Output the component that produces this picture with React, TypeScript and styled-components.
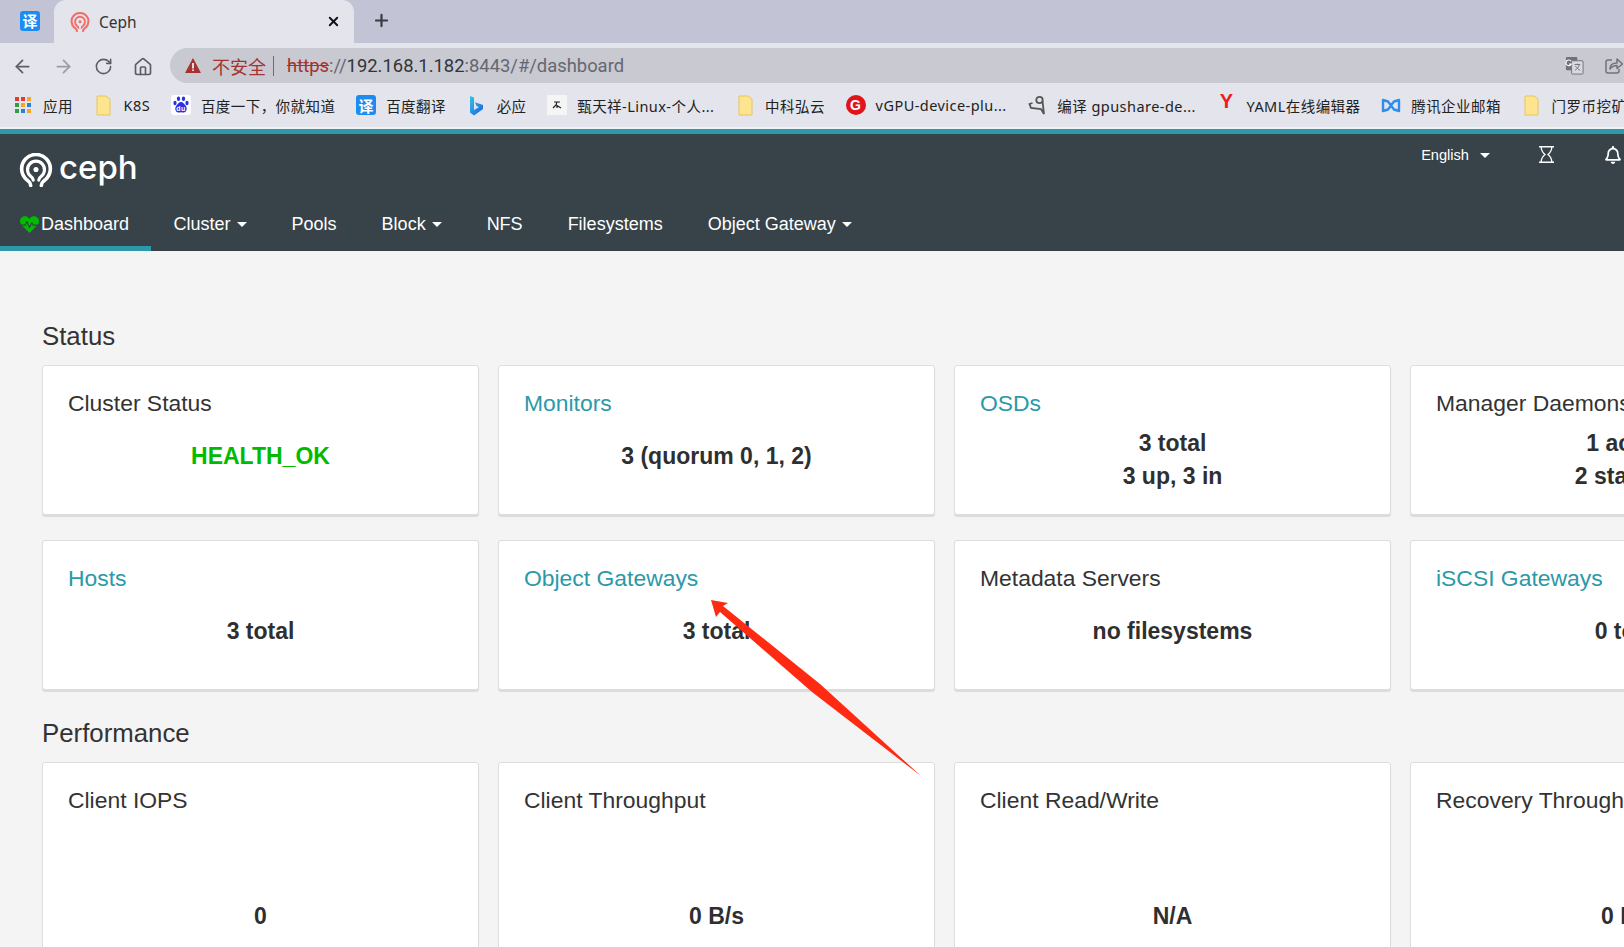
import React from 'react';
import styled, { createGlobalStyle } from 'styled-components';
import { ArrowLeft, ArrowRight, RotateCw, House, Plus, X } from 'lucide-react';
import { FaHeartbeat, FaRegBell } from 'react-icons/fa';

const GlobalStyle = createGlobalStyle`
    html, body {
        margin: 0;
        padding: 0;
        background: #f4f4f4;
        overflow: hidden;
    }
`;

const Page = styled.div`
    position: relative;
    width: 1624px;
    height: 947px;
    overflow: hidden;
    font-family: "Liberation Sans", Arial, sans-serif;
    color: #333;
`;

/* browser chrome */
const TabStrip = styled.div`
    display: flex;
    align-items: stretch;
    height: 43px;
    background: #c2c3d5;
    font-family: "Noto Sans", "Noto Sans CJK SC", sans-serif;
`;

const PinnedTab = styled.div`
    display: flex;
    align-items: center;
    width: 54px;
    padding: 0 0 2px 20px;
    box-sizing: border-box;
`;

const ActiveTab = styled.div`
    display: flex;
    align-items: center;
    width: 300px;
    padding: 0 13px 0 16px;
    box-sizing: border-box;
    background: #e3e4ec;
    border-radius: 12px 12px 0 0;
    font-size: 15.5px;
    color: #333;
`;

const TabTitle = styled.span`
    flex: 1;
    margin-left: 9px;
`;

const NewTab = styled.div`
    display: flex;
    align-items: center;
    padding: 0 0 2px 18px;
    color: #3c3c44;
`;

const Toolbar = styled.div`
    display: flex;
    align-items: flex-end;
    height: 40px;
    background: #e3e4ec;
    font-family: "Noto Sans", "Noto Sans CJK SC", sans-serif;
`;

const ToolButtons = styled.div`
    display: flex;
    align-items: center;
    gap: 20px;
    width: 170px;
    height: 35px;
    padding: 2px 0 0 12px;
    box-sizing: border-box;
`;

const ToolButton = styled.span<{ $dim?: boolean }>`
    display: flex;
    color: ${p => (p.$dim ? '#9a9ba6' : '#5c5d66')};
`;

const Omnibox = styled.div`
    display: flex;
    align-items: center;
    flex: 1;
    height: 35px;
    padding-left: 15px;
    background: #c8c9d1;
    border-radius: 18px 0 0 18px;
    font-family: Roboto, sans-serif;
    font-size: 18.4px;
    color: #666770;
`;

const NotSecure = styled.span`
    margin-left: 11px;
    font-family: "Noto Sans CJK SC", sans-serif;
    font-size: 18px;
    color: #a5322e;
`;

const Divider = styled.span`
    width: 1px;
    height: 20px;
    margin: 0 13px 0 7px;
    background: #6b6c74;
`;

const Scheme = styled.span`
    color: #a5322e;
    text-decoration: line-through;
`;

const Host = styled.span`
    color: #33343a;
`;

const OmniActions = styled.div`
    display: flex;
    align-items: center;
    gap: 21px;
    margin-left: auto;
    margin-right: 1px;
    color: #70717a;
`;

const BookmarkBar = styled.div`
    display: flex;
    align-items: center;
    gap: 20.7px;
    height: 46px;
    box-sizing: border-box;
    padding-left: 13px;
    background: #e3e4ec;
    border-bottom: 2px solid #f1f1f5;
    font-family: "Noto Sans", "Noto Sans CJK SC", sans-serif;
    font-size: 14.5px;
    letter-spacing: 0.45px;
    color: #222;
    white-space: nowrap;
`;

const Bookmark = styled.div`
    display: flex;
    align-items: center;
    gap: 10px;
    flex: none;
`;

const BookmarkIcon = styled.span`
    display: flex;
    align-items: center;
    justify-content: center;
    width: 20px;
    height: 20px;
`;

const TranslateBadge = styled.span`
    display: flex;
    align-items: center;
    justify-content: center;
    width: 20px;
    height: 20px;
    border-radius: 3px;
    background: #1d8cf2;
    color: #fff;
    font-family: "Noto Sans CJK SC", sans-serif;
    font-size: 15px;
    font-weight: 700;
    letter-spacing: 0;
`;

const GBadge = styled.span`
    display: flex;
    align-items: center;
    justify-content: center;
    width: 20px;
    height: 20px;
    border-radius: 50%;
    background: #e0141c;
    color: #fff;
    font-family: "Liberation Sans", sans-serif;
    font-size: 14px;
    font-weight: 700;
`;

const YLetter = styled.span`
    margin-top: -7px;
    color: #f01a22;
    font-family: "Liberation Sans", sans-serif;
    font-size: 20px;
    font-weight: 700;
`;

/* ceph header */
const Header = styled.header`
    background: #374249;
    border-top: 5px solid #2b99a8;
    color: #fff;
`;

const TopRow = styled.div`
    display: flex;
    justify-content: space-between;
    height: 68px;
    padding-left: 19px;
`;

const Brand = styled.div`
    display: flex;
    align-items: center;
    gap: 6px;
    padding-top: 3px;
`;

const BrandName = styled.span`
    margin-top: -5px;
    font-family: Inter, sans-serif;
    font-size: 33px;
    font-weight: 500;
    line-height: 1;
`;

const Utilities = styled.div`
    display: flex;
    align-items: flex-start;
    padding-top: 12px;
    margin-right: 2px;
    font-size: 14.6px;
`;

const Language = styled.div`
    display: flex;
    align-items: center;
    gap: 11px;
    height: 18px;
    margin-right: 49px;
`;

const UtilityIcon = styled.span`
    display: flex;
    margin-right: 50px;
    &:last-child {
        margin-right: 0;
    }
`;

const NavRow = styled.nav`
    display: flex;
    height: 49px;
    font-size: 18px;
`;

const NavItem = styled.div<{ $active?: boolean }>`
    display: flex;
    align-items: center;
    gap: 6px;
    padding: 0 ${p => (p.$active ? '22px 0 20px' : '22.5px')};
    border-bottom: 5px solid ${p => (p.$active ? '#2b99a8' : 'transparent')};
    color: #fff;
    white-space: nowrap;
`;

const NavIcon = styled.span`
    display: flex;
    margin-right: -4px;
`;

const Caret = styled.span`
    width: 0;
    height: 0;
    border-top: 5px solid #fff;
    border-left: 5px solid transparent;
    border-right: 5px solid transparent;
`;

/* dashboard */
const Content = styled.main`
    padding: 70px 0 0 42px;
`;

const SectionTitle = styled.h3`
    margin: 0 0 14px;
    font-size: 25.8px;
    font-weight: 400;
    line-height: 30px;
    color: #333;
`;

const CardGrid = styled.div`
    display: grid;
    grid-template-columns: repeat(4, 437px);
    column-gap: 19px;
    row-gap: 25px;
    width: 1805px;
    margin-bottom: 28px;
`;

const Card = styled.div<{ $tall?: boolean }>`
    height: ${p => (p.$tall ? '260px' : '150px')};
    padding: 23px 0 0 25px;
    box-sizing: border-box;
    background: #fff;
    border: 1px solid #ddd;
    border-radius: 3px;
    box-shadow: 0 2px 1px rgba(0, 0, 0, 0.1);
`;

const CardTitle = styled.div<{ $link?: boolean }>`
    height: 28px;
    font-size: 22.9px;
    line-height: 28px;
    white-space: nowrap;
    color: ${p => (p.$link ? '#2b99a8' : '#333')};
`;

const CardValue = styled.div<{ $ok?: boolean; $gap: number }>`
    display: flex;
    flex-direction: column;
    justify-content: center;
    height: 66px;
    margin: ${p => p.$gap}px 25px 0 0;
    font-size: 23px;
    font-weight: 700;
    line-height: 33px;
    text-align: center;
    white-space: nowrap;
    color: ${p => (p.$ok ? '#00bb00' : '#2f2f2f')};
`;

const Annotation = styled.svg`
    position: absolute;
    top: 0;
    left: 0;
    pointer-events: none;
`;

const CephMark = ({ size, color }: { size: number; color: string }) => (
    <svg width={size} height={size} viewBox="0 0 32 32" fill="none" stroke={color} strokeLinecap="round">
        <path d="M11 30.5c0-3-1.4-3.2-3.6-5.2A13.5 13.5 0 1 1 24.6 25.3c-2.200 2-3.600 2.200-3.600 5.200" strokeWidth="3.4" />
        <path d="M13.4 25.5c-.3-2-1-2.6-2.4-3.6a8 8 0 1 1 10 0c-1.400 1-2.100 1.600-2.400 3.600" strokeWidth="3" />
        <circle cx="16" cy="15.500" r="2.400" fill={color} stroke="none" />
    </svg>
);

const Hourglass = () => (
    <svg width="15" height="17" viewBox="0 0 15 17" fill="none" stroke="#fff" strokeWidth="1.300">
        <path d="M0 .7h15M0 16.300h15" strokeWidth="1.500" />
        <path d="M2.200 1c0 3.500 1.500 5.500 3.800 7.500-2.300 2-3.800 4-3.800 7.500M12.800 1c0 3.500-1.500 5.500-3.800 7.500 2.300 2 3.800 4 3.800 7.500" />
    </svg>
);

const AppsGrid = () => {
    const colors = ['#e8392f', '#e8392f', '#f5a623', '#2f9e44', '#f5a623', '#2a7de1', '#2f9e44', '#2a7de1', '#f5a623'];
    return (
        <svg width="16" height="16" viewBox="0 0 16 16">
            {colors.map((c, i) => (
                <rect key={i} x={(i % 3) * 6} y={Math.floor(i / 3) * 6} width="4" height="4" fill={c} />
            ))}
        </svg>
    );
};

const Folder = () => (
    <svg width="15" height="21" viewBox="0 0 15 21">
        <path d="M1 1h9l4 3v16H1z" fill="#fde58f" stroke="#e8c55e" />
    </svg>
);

const BaiduPaw = () => (
    <svg width="20" height="20" viewBox="0 0 20 20">
        <rect width="20" height="20" rx="3" fill="#fff" />
        <g fill="#2932e1">
            <ellipse cx="7.500" cy="3.800" rx="1.700" ry="2.300" />
            <ellipse cx="12.500" cy="3.800" rx="1.700" ry="2.300" />
            <ellipse cx="16" cy="8" rx="1.600" ry="2.200" />
            <ellipse cx="4" cy="8" rx="1.600" ry="2.200" />
            <path d="M10 7c2.200 0 3 2 4.500 3.500 2 2 1.500 7-2 7-1 0-1.500-.3-2.500-.3s-1.500.3-2.500.3c-3.500 0-4-5-2-7C7 9 7.800 7 10 7z" />
        </g>
        <text x="10" y="16" textAnchor="middle" fontSize="7" fontWeight="700" fill="#fff" fontFamily="Liberation Sans, sans-serif">du</text>
    </svg>
);

const BingMark = () => (
    <svg width="15" height="21" viewBox="0 0 15 21">
        <defs>
            <linearGradient id="bingFill" x1="0" y1="0" x2="1" y2="1">
                <stop offset="0" stopColor="#36c3e8" />
                <stop offset="1" stopColor="#1a5fe0" />
            </linearGradient>
        </defs>
        <path d="M1 1l4 1.500v12.500l5-2.900-2.500-1.200-1.500-3.600L14 10v4L5 20.500 1 17.500z" fill="url(#bingFill)" />
    </svg>
);

const AvatarMark = () => (
    <svg width="20" height="20" viewBox="0 0 20 20">
        <rect width="20" height="20" fill="#f5f5f5" />
        <path d="M7 7h6M10 7l-1 3-3 3M9 10l5 3M10 11v2" stroke="#222" strokeWidth="1.200" fill="none" />
    </svg>
);

const GpuShareMark = () => (
    <svg width="19" height="21" viewBox="0 0 19 21" fill="none" stroke="#555" strokeWidth="1.800">
        <circle cx="11.500" cy="5" r="3.200" />
        <path d="M14.500 6c.5 4 .8 8 1.500 13L13 14 3 13 1.500 9l3-1" />
    </svg>
);

const TencentMark = () => (
    <svg width="20" height="15" viewBox="0 0 20 15" fill="none" stroke="#2f8df0" strokeWidth="2.400" strokeLinejoin="round">
        <path d="M2 2v11l5-1.500L13 3.500 18 2v11l-5-1.500L7 3.500z" />
    </svg>
);

const GoogleTranslate = () => (
    <svg width="19" height="19" viewBox="0 0 20 20">
        <rect x="1" y="1" width="12" height="14" rx="1" fill="#70717a" />
        <rect x="7" y="5" width="12" height="14" rx="1" fill="#d9dae0" stroke="#70717a" />
        <path d="M10 9h6M13 8v1M15 9c-.5 3-2.500 5-4.500 6M11 10.500c1 2 3 3.500 5 4.500" stroke="#70717a" fill="none" />
        <path d="M6.500 5.500A3 3 0 1 0 6.700 8.500H4.500" stroke="#fff" strokeWidth="1.200" fill="none" />
    </svg>
);

const ShareBox = () => (
    <svg width="18" height="17" viewBox="0 0 18 17" fill="none" stroke="#70717a" strokeWidth="1.500" strokeLinejoin="round">
        <path d="M7 3H3a2 2 0 0 0-2 2v9a2 2 0 0 0 2 2h9a2 2 0 0 0 2-2v-2" />
        <path d="M5 12c0-4 3-6 7-6V2l5.500 5-5.500 4.500V8.500c-3 0-5 1-7 3.500z" />
    </svg>
);

const Warning = () => (
    <svg width="16" height="15" viewBox="0 0 16 15">
        <path d="M8 0l8 15H0z" fill="#a5322e" />
        <path d="M7.200 5h1.600v5.500H7.200zM7.200 11.500h1.600v1.600H7.200z" fill="#fff" />
    </svg>
);

const bookmarks: { icon: React.ReactNode; label: string }[] = [
    { icon: <AppsGrid />, label: '应用' },
    { icon: <Folder />, label: 'K8S' },
    { icon: <BaiduPaw />, label: '百度一下，你就知道' },
    { icon: <TranslateBadge>译</TranslateBadge>, label: '百度翻译' },
    { icon: <BingMark />, label: '必应' },
    { icon: <AvatarMark />, label: '甄天祥-Linux-个人...' },
    { icon: <Folder />, label: '中科弘云' },
    { icon: <GBadge>G</GBadge>, label: 'vGPU-device-plu...' },
    { icon: <GpuShareMark />, label: '编译 gpushare-de...' },
    { icon: <YLetter>Y</YLetter>, label: 'YAML在线编辑器' },
    { icon: <TencentMark />, label: '腾讯企业邮箱' },
    { icon: <Folder />, label: '门罗币挖矿' },
];

interface CardData {
    title: string;
    link?: boolean;
    ok?: boolean;
    lines: string[];
}

const statusCards: CardData[] = [
    { title: 'Cluster Status', ok: true, lines: ['HEALTH_OK'] },
    { title: 'Monitors', link: true, lines: ['3 (quorum 0, 1, 2)'] },
    { title: 'OSDs', link: true, lines: ['3 total', '3 up, 3 in'] },
    { title: 'Manager Daemons', lines: ['1 active', '2 standby'] },
    { title: 'Hosts', link: true, lines: ['3 total'] },
    { title: 'Object Gateways', link: true, lines: ['3 total'] },
    { title: 'Metadata Servers', lines: ['no filesystems'] },
    { title: 'iSCSI Gateways', link: true, lines: ['0 total'] },
];

const performanceCards: CardData[] = [
    { title: 'Client IOPS', lines: ['0'] },
    { title: 'Client Throughput', lines: ['0 B/s'] },
    { title: 'Client Read/Write', lines: ['N/A'] },
    { title: 'Recovery Throughput', lines: ['0 B/s'] },
];

const InfoCard = ({ card, tall }: { card: CardData; tall?: boolean }) => {
    // two line values sit a little lower than single line ones
    const gap = tall ? 69 : card.lines.length > 1 ? 10 : 6;
    return (
        <Card $tall={tall}>
            <CardTitle $link={card.link}>{card.title}</CardTitle>
            <CardValue $ok={card.ok} $gap={gap}>
                {card.lines.map(line => (
                    <div key={line}>{line}</div>
                ))}
            </CardValue>
        </Card>
    );
};

export default function App() {
    return (
        <Page>
            <GlobalStyle />
            <TabStrip>
                <PinnedTab>
                    <TranslateBadge>译</TranslateBadge>
                </PinnedTab>
                <ActiveTab>
                    <CephMark size={20} color="#f0706a" />
                    <TabTitle>Ceph</TabTitle>
                    <X size={15} strokeWidth={3} color="#111" />
                </ActiveTab>
                <NewTab>
                    <Plus size={19} strokeWidth={2.8} />
                </NewTab>
            </TabStrip>
            <Toolbar>
                <ToolButtons>
                    <ToolButton><ArrowLeft size={21} /></ToolButton>
                    <ToolButton $dim><ArrowRight size={21} /></ToolButton>
                    <ToolButton><RotateCw size={19} /></ToolButton>
                    <ToolButton><House size={20} /></ToolButton>
                </ToolButtons>
                <Omnibox>
                    <Warning />
                    <NotSecure>不安全</NotSecure>
                    <Divider />
                    <Scheme>https</Scheme>
                    <span>://</span>
                    <Host>192.168.1.182</Host>
                    <span>:8443/#/dashboard</span>
                    <OmniActions>
                        <GoogleTranslate />
                        <ShareBox />
                    </OmniActions>
                </Omnibox>
            </Toolbar>
            <BookmarkBar>
                {bookmarks.map(b => (
                    <Bookmark key={b.label}>
                        <BookmarkIcon>{b.icon}</BookmarkIcon>
                        <span>{b.label}</span>
                    </Bookmark>
                ))}
            </BookmarkBar>
            <Header>
                <TopRow>
                    <Brand>
                        <CephMark size={34} color="#fff" />
                        <BrandName>ceph</BrandName>
                    </Brand>
                    <Utilities>
                        <Language>
                            English <Caret />
                        </Language>
                        <UtilityIcon><Hourglass /></UtilityIcon>
                        <UtilityIcon><FaRegBell size={18} /></UtilityIcon>
                    </Utilities>
                </TopRow>
                <NavRow>
                    <NavItem $active>
                        <NavIcon><FaHeartbeat size={19} color="#00bb00" /></NavIcon>
                        Dashboard
                    </NavItem>
                    <NavItem>Cluster <Caret /></NavItem>
                    <NavItem>Pools</NavItem>
                    <NavItem>Block <Caret /></NavItem>
                    <NavItem>NFS</NavItem>
                    <NavItem>Filesystems</NavItem>
                    <NavItem>Object Gateway <Caret /></NavItem>
                </NavRow>
            </Header>
            <Content>
                <SectionTitle>Status</SectionTitle>
                <CardGrid>
                    {statusCards.map(c => (
                        <InfoCard key={c.title} card={c} />
                    ))}
                </CardGrid>
                <SectionTitle>Performance</SectionTitle>
                <CardGrid>
                    {performanceCards.map(c => (
                        <InfoCard key={c.title} card={c} tall />
                    ))}
                </CardGrid>
            </Content>
            <Annotation width="1624" height="947" viewBox="0 0 1624 947">
                <polygon points="711,600 728,603 723,606 820,684 921,776 812,692 720,612 716,617" fill="#ff2a12" />
            </Annotation>
        </Page>
    );
}
